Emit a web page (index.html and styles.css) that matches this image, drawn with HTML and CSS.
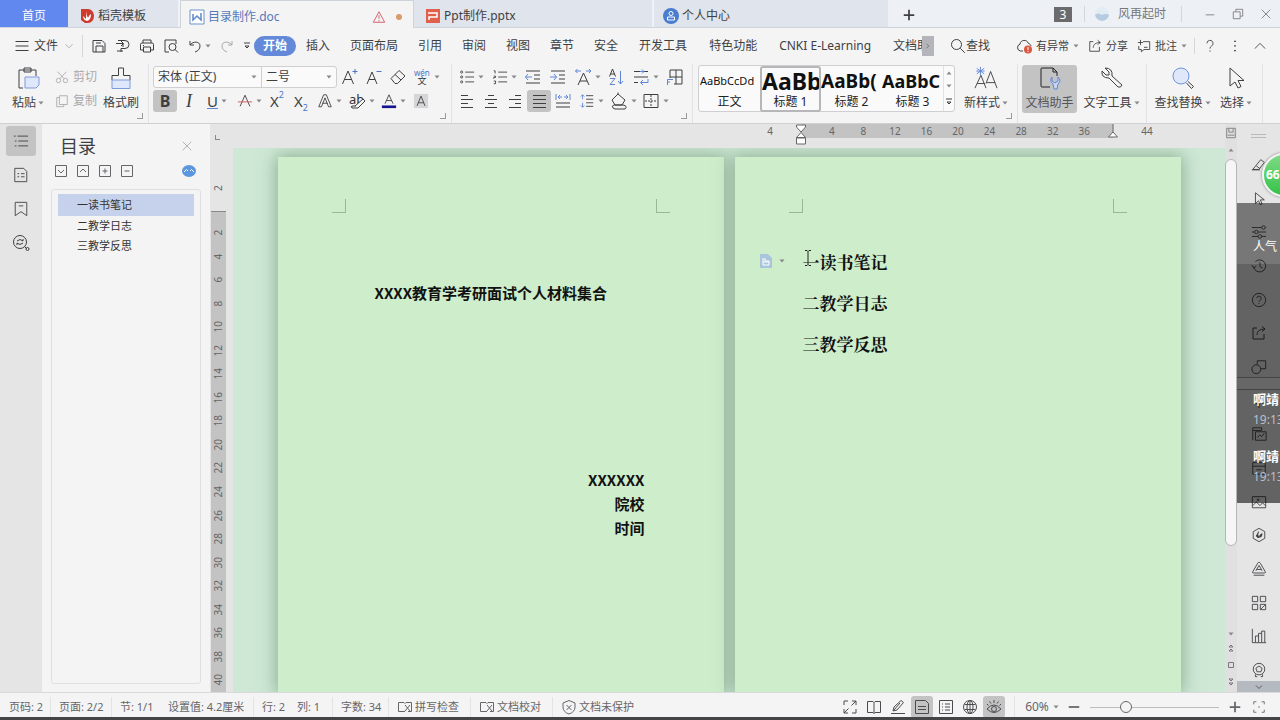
FILE: index.html
```html
<!DOCTYPE html>
<html lang="zh-CN">
<head>
<meta charset="utf-8">
<title>目录制作.doc</title>
<link rel="stylesheet" href="styles.css">
</head>
<body>
<svg class="sprite" aria-hidden="true">
  <symbol id="down" viewBox="0 0 6 4"><path d="M0.5 0.5h5L3 3.5z" fill="currentColor" stroke="none"/></symbol>
  <symbol id="up" viewBox="0 0 6 4"><path d="M0.5 3.5h5L3 0.5z" fill="currentColor" stroke="none"/></symbol>
  <symbol id="menu" viewBox="0 0 16 16"><path d="M1.500 3.500h13M1.500 8h13M1.500 12.500h13"/></symbol>
  <symbol id="chev-down" viewBox="0 0 16 16"><path d="M4 6l4 4 4-4"/></symbol>
  <symbol id="chev-up" viewBox="0 0 16 16"><path d="M2 11l6-6 6 6"/></symbol>
  <symbol id="chev-right" viewBox="0 0 16 16"><path d="M6 5l3 3-3 3"/></symbol>
  <symbol id="save" viewBox="0 0 16 16"><path d="M2 2.500h9l3 3V14H2zM5 14V8h7v6M5 5h5"/></symbol>
  <symbol id="export" viewBox="0 0 16 16"><path d="M3 2.500h7a4 4 0 0 1 0 8H6V14M1 5.500h7V9M2 13h6M6 3L8.500 5.500 6 8"/></symbol>
  <symbol id="print" viewBox="0 0 16 16"><path d="M4 5V2h8v3M4 12H1.500V6.500q0-1.500 1.500-1.500h10q1.500 0 1.500 1.500V12H12M4.500 9h7v5h-7zM4 7.500h1"/></symbol>
  <symbol id="preview" viewBox="0 0 16 16"><path d="M6 14H2V2h11v4"/><circle cx="9.500" cy="9" r="3.500"/><path d="M12 11.500l3 3"/></symbol>
  <symbol id="undo" viewBox="0 0 16 16"><path d="M3 3v4h4M3 7c3-4 10-4 10 1 0 3-2 5-5 6"/></symbol>
  <symbol id="redo" viewBox="0 0 16 16"><path d="M13 3v4H9M13 7C10 3 3 3 3 8c0 3 2 5 5 6"/></symbol>
  <symbol id="search" viewBox="0 0 16 16"><circle cx="6.500" cy="6.500" r="5"/><path d="M10.300 10.300l4.500 4.500"/></symbol>
  <symbol id="cloud" viewBox="0 0 16 16"><path d="M7 13H4.500a3.500 3.500 0 0 1-.5-6.800C4.500 1.500 11 1 12.500 5.500 14 6 15 7 15 8"/><circle cx="12" cy="11.500" r="4" fill="#d9583f" stroke="none"/><path d="M12 9v3M12 13v1" stroke="#fff"/></symbol>
  <symbol id="share" viewBox="0 0 16 16"><path d="M6 3H2v11h11V9M6 10c0-4 3-6 8-6M11 1.500L14 4l-3 2.500"/></symbol>
  <symbol id="comment" viewBox="0 0 16 16"><path d="M7 3h7.500v9H8l-3 2.500V12H2V8M4 1v6M1 4h6M8 9.500h4"/></symbol>
  <symbol id="dots" viewBox="0 0 16 16"><path d="M8 2v1.500M8 7.200v1.500M8 12.500V14" stroke-width="2"/></symbol>
  <symbol id="help" viewBox="0 0 16 16"><path d="M4.500 5a3.500 3.500 0 1 1 5 3.200Q8 9 8 11M8 13v1.500"/></symbol>
  <symbol id="paste" viewBox="0 0 24 24"><path d="M7 22H3V4h17v6M8 2h7v4H8z"/><path d="M9 11h14v8l-3 3H9z" fill="#dfe8fb" stroke="#7f9bd8"/></symbol>
  <symbol id="cut" viewBox="0 0 16 16"><circle cx="4" cy="12" r="2.500"/><circle cx="12" cy="12" r="2.500"/><path d="M5.500 10L13 2M10.500 10L3 2"/></symbol>
  <symbol id="copy" viewBox="0 0 16 16"><path d="M5 2h9v10H5zM5 4H2v10.500h8V12"/></symbol>
  <symbol id="brush" viewBox="0 0 24 24"><path d="M3 14V9.500h6.500V2h5v7.500H21V14"/><path d="M3 14h18v8.500H3z" fill="#dfe8fb" stroke="#7f9bd8"/></symbol>
  <symbol id="a-plus" viewBox="0 0 18 18"><path d="M1.500 16L7 3l5.500 13M3.500 11.500h7"/><path d="M14 1v5M11.500 3.500h5" stroke="#4b74c9"/></symbol>
  <symbol id="a-minus" viewBox="0 0 18 18"><path d="M2 16L7 4l5 12M4 11.500h6"/><path d="M11.500 3.500h5" stroke="#4b74c9"/></symbol>
  <symbol id="eraser" viewBox="0 0 18 18"><path d="M2 10.500l8-8 6 5.500-7.500 7.500H6zM6 6.500l6 5.500"/></symbol>
  <symbol id="pinyin" viewBox="0 0 20 18"><text x="1" y="8" font-size="9" fill="#4b74c9" stroke="none">wén</text><text x="5" y="17" font-size="10" fill="#333" stroke="none">文</text></symbol>
  <symbol id="strike" viewBox="0 0 18 18"><path d="M3.500 15L9 2.500 14.500 15"/><path d="M1 10h16" stroke="#d65050"/></symbol>
  <symbol id="effect" viewBox="0 0 18 18"><path d="M2 15.500L7.500 2h3L16 15.500h-3L9 5.500 5 15.500zM6 11.500h6"/></symbol>
  <symbol id="marker" viewBox="0 0 18 18"><text x="1" y="12" font-size="13" fill="#333" stroke="none">ab</text><path d="M7 14l8-7 2 2-7 7H4q-2-2 1-2h3" fill="#f5f5f6"/></symbol>
  <symbol id="font-color" viewBox="0 0 18 18"><path d="M4.500 12L9 2l4.500 10M6 8.500h6"/><path d="M1 15.500h16" stroke="#16168c" stroke-width="3"/></symbol>
  <symbol id="shade" viewBox="0 0 18 18"><path d="M1 1h16v16H1z" fill="#d6d6d8" stroke="none"/><path d="M4.500 14.500L9 3.500l4.500 11M6 11h6"/></symbol>
  <symbol id="bullets" viewBox="0 0 18 18"><circle cx="3" cy="3.500" r="1.200"/><circle cx="3" cy="9" r="1.200"/><circle cx="3" cy="14.500" r="1.200"/><path d="M7 3.500h10M7 9h10M7 14.500h10"/></symbol>
  <symbol id="numbers" viewBox="0 0 18 18"><path d="M2 2h1.500v3M2 8h2v1.500H2V11M2 13.500h2v3H2M7 3.500h10M7 9h10M7 14.500h10"/></symbol>
  <symbol id="outdent" viewBox="0 0 18 18"><path d="M2 3h14M10 7h6M10 11h6M2 15h14"/><path d="M8 9H1.500M4 6L1.500 9 4 12" stroke="#5f86d6"/></symbol>
  <symbol id="indent" viewBox="0 0 18 18"><path d="M2 3h14M10 7h6M10 11h6M2 15h14"/><path d="M1 9h6.500M5 6l2.500 3L5 12" stroke="#5f86d6"/></symbol>
  <symbol id="a-width" viewBox="0 0 18 18"><path d="M4 17L9.500 5 15 17M6 13h7"/><path d="M7 3H1.500M3.500 1L1.500 3l2 2M12 3h5M15 1l2 2-2 2" stroke="#5f86d6"/></symbol>
  <symbol id="sort" viewBox="0 0 18 18"><path d="M2.500 8.500L5.500 1l3 7.500M3.500 6h4"/><path d="M3 10.500h5L3 16.500h5M13.500 3v13M11 13l2.500 3 2.500-3" stroke="#5f86d6"/></symbol>
  <symbol id="wrap" viewBox="0 0 18 18"><path d="M2 3.500h6M2 9h14M2 14.500h4M12 3.500h4"/><path d="M8 3.500h4M10 1.500l2 2-2 2M16 11v3.500H9M11 12l-2.500 2.500L11 17" stroke="#5f86d6"/></symbol>
  <symbol id="layout" viewBox="0 0 18 18"><path d="M5 10V2h12v14H9M5 9h12M11 2v14"/><path d="M8 11.500H2.500V17M5 14H2.500" stroke="#5f86d6"/></symbol>
  <symbol id="al-left" viewBox="0 0 18 18"><path d="M3 3.500h7M3 7.500h12M3 11.500h7M3 15.500h12"/></symbol>
  <symbol id="al-center" viewBox="0 0 18 18"><path d="M6 3.500h6M3 7.500h12M6 11.500h6M3 15.500h12"/></symbol>
  <symbol id="al-right" viewBox="0 0 18 18"><path d="M9 3.500h6M3 7.500h12M9 11.500h6M3 15.500h12"/></symbol>
  <symbol id="al-just" viewBox="0 0 18 18"><path d="M3 3.500h13M3 7.500h13M3 11.500h13M3 15.500h13"/></symbol>
  <symbol id="al-dist" viewBox="0 0 18 18"><path d="M2 11h14M2 15h14"/><path d="M2 2v6M16 2v6M4 5h4M6 3L4 5l2 2M10 5h4M12 3l2 2-2 2" stroke="#5f86d6"/></symbol>
  <symbol id="spacing" viewBox="0 0 18 18"><path d="M8 3h8M8 7h8M8 11h8M8 15h8"/><path d="M4 2v5M2 4l2-2 2 2M4 16v-5M2 14l2 2 2-2" stroke="#5f86d6"/></symbol>
  <symbol id="bucket" viewBox="0 0 18 18"><path d="M2 8l6-6 7 6-3 5H5zM8 2V0.500M3 16q-2-2 1-3h9q5 1 2 4H5z"/></symbol>
  <symbol id="borders" viewBox="0 0 18 18"><path d="M2 2.500h14v13H2z"/><path d="M9 3v12M3 9h12" stroke-dasharray="2 1"/></symbol>
  <symbol id="new-style" viewBox="0 0 26 24"><path d="M1 23L7.500 9 13 23M3.500 18h8M13 18L18 5l7 18M14 17h9"/><path d="M7 0v9M3 1.500l8 6M11 1.500l-8 6M2.500 4.500h9" stroke="#5f86d6"/></symbol>
  <symbol id="assistant" viewBox="0 0 24 24"><path d="M12 21H4q-1 0-1-1V3q0-1 1-1h11l4 4v4M15 2v4h4" stroke="#222"/><path d="M14 11v4l3 2 3-2v-4q4 3 0 7l-1 5h-3l-1-5q-4-3-1-7z" fill="#c9d6f2" stroke="#5f86d6"/></symbol>
  <symbol id="wrench" viewBox="0 0 24 24"><path d="M5 2l4 4v3H6L2 5q-1 7 7 7l9 9q3 1 4-2l-10-9q1-8-7-8z"/></symbol>
  <symbol id="find-big" viewBox="0 0 24 24"><circle cx="10" cy="10" r="8" fill="#dfe8fb" stroke="#6f94dd"/><path d="M15.500 17l5 5.500 2-2-5.500-5"/></symbol>
  <symbol id="pointer" viewBox="0 0 24 24"><path d="M6 2v18l5-4 3 6 3-1.500-3-6h6z"/></symbol>
  <symbol id="outline" viewBox="0 0 18 18"><path d="M1 3.500h2M5 3.500h12M2 9h2M6 9h11M2 14.500h2M6 14.500h11"/></symbol>
  <symbol id="page" viewBox="0 0 18 18"><path d="M2 1.500h10l3.500 3.500V16.500H2zM5 7.500h2M9 7.500h4M5 11h2M9 11h4"/></symbol>
  <symbol id="bookmark" viewBox="0 0 18 18"><path d="M2.500 1.500h13v15L9 12l-6.500 4.500zM6.500 5.500h5"/></symbol>
  <symbol id="search-doc" viewBox="0 0 18 18"><circle cx="8" cy="8" r="6.500"/><path d="M12.500 12.500l2 2M5 7q3-3 6 0V5M11 9q-3 3-6 0v2"/><circle cx="15.500" cy="15" r="1.500"/></symbol>
  <symbol id="box-down" viewBox="0 0 14 14"><path d="M1.500 1.500h11v11h-11zM4 6l3 3 3-3"/></symbol>
  <symbol id="box-up" viewBox="0 0 14 14"><path d="M1.500 1.500h11v11h-11zM4 8l3-3 3 3"/></symbol>
  <symbol id="box-plus" viewBox="0 0 14 14"><path d="M1.500 1.500h11v11h-11zM4.500 7h5M7 4.500v5"/></symbol>
  <symbol id="box-minus" viewBox="0 0 14 14"><path d="M1.500 1.500h11v11h-11zM4.500 7h5"/></symbol>
  <symbol id="close" viewBox="0 0 14 14"><path d="M2 2l10 10M12 2L2 12"/></symbol>
  <symbol id="pencil" viewBox="0 0 18 18"><path d="M2 14l9-11 4 3-6 8zM6 10l4 3M1 14.500h9"/></symbol>
  <symbol id="arrow" viewBox="0 0 18 18"><path d="M5 2v12l3.500-3 2 4.500 2-1-2-4.500H15z"/></symbol>
  <symbol id="sliders" viewBox="0 0 18 18"><path d="M1 4h11M16 4h1M1 9h3M8 9h9M1 14h7M12 14h5"/><circle cx="14" cy="4" r="2"/><circle cx="6" cy="9" r="2"/><circle cx="10" cy="14" r="2"/></symbol>
  <symbol id="history" viewBox="0 0 18 18"><path d="M3 10A6.800 6.800 0 1 0 5 4M1 8l2 3 3-2M10 5v4.500l3 2"/></symbol>
  <symbol id="question" viewBox="0 0 18 18"><circle cx="9" cy="9" r="7.500"/><path d="M6.500 7a2.500 2.500 0 1 1 3.500 2.500Q9 10 9 11M9 12.500v1"/></symbol>
  <symbol id="shapes" viewBox="0 0 18 18"><circle cx="6" cy="11.500" r="5"/><path d="M7 6V2h9.500v9H11"/></symbol>
  <symbol id="plus-box" viewBox="0 0 18 18"><path d="M9 1v16M4 6h10v6H4z"/></symbol>
  <symbol id="pictures" viewBox="0 0 18 18"><path d="M2 16V2h10v3M2 5h10M5 6.500h12V16H5zM7 13l3-3 2 2 3-4"/></symbol>
  <symbol id="archive" viewBox="0 0 18 18"><path d="M2 3h14v13H2zM2 7h14M6 11h6"/></symbol>
  <symbol id="image" viewBox="0 0 18 18"><path d="M1.500 3h15v12.500h-15zM2 13l4-4 4 4 3-3 3 3"/><circle cx="8" cy="6.500" r="1"/></symbol>
  <symbol id="leaf" viewBox="0 0 18 18"><path d="M9 1.500l6.500 3.700v7.600L9 16.500l-6.500-3.700V5.200z"/><path d="M8.500 5q-2 4 .5 7-3 0-3-3M12.500 7.500q0 4-3 4 0-3 3-4z" fill="currentColor"/></symbol>
  <symbol id="triangle" viewBox="0 0 18 18"><path d="M9 1.500q1 0 1.500 1L16 12q1 1.500-1 1.500H3Q1 13.500 2 12l5.500-9.500q.5-1 1.500-1zM5.500 11L9 5l3.500 6M6.500 9.500h5M3 16h12"/></symbol>
  <symbol id="apps" viewBox="0 0 18 18"><path d="M1.500 1.500h6v6h-6zM10.500 1.500h6v6h-6zM1.500 10.500h6v6h-6zM10.500 10.500h6v6h-6zM11 16l5-5"/></symbol>
  <symbol id="chart" viewBox="0 0 18 18"><path d="M1.500 1v15.500H17M5 16V9h3.500v7M8.500 9V6H12v10M12 6V3.500h3.500V16"/></symbol>
  <symbol id="medal" viewBox="0 0 18 18"><circle cx="9" cy="8" r="6.500"/><path d="M9 4.500l3.500 2.500-1.300 4H6.800L5.500 7zM5 14v2.500h2M13 14v2.500h-2"/></symbol>
  <symbol id="expand" viewBox="0 0 16 16"><path d="M6 2H2v4M10 2h4v4M6 14H2v-4M10 14h4v-4M9.500 6.500L14 2M6.500 9.500L2 14"/></symbol>
  <symbol id="book" viewBox="0 0 16 16"><path d="M1.500 2.500H7l1 1 1-1h5.500v11H9l-1 1-1-1H1.500zM8 3.500v11"/></symbol>
  <symbol id="pen-line" viewBox="0 0 16 16"><path d="M3 12l1-4 7-6.500 2.500 2L7 11zM4 11l6-7M1 14.500h14"/></symbol>
  <symbol id="doc" viewBox="0 0 16 16"><path d="M1.500 1.500h10l3 3v10h-13zM4 7.500h8M4 10.500h8"/></symbol>
  <symbol id="list" viewBox="0 0 16 16"><path d="M1.500 1.500h13v13h-13zM4 5h1M7 5h5M4 8h1M7 8h5M4 11h1M7 11h5"/></symbol>
  <symbol id="globe" viewBox="0 0 16 16"><circle cx="8" cy="8" r="6.500"/><ellipse cx="8" cy="8" rx="3" ry="6.500"/><path d="M2.500 5.500h11M2.500 10.500h11M8 1.500v13"/></symbol>
  <symbol id="eye" viewBox="0 0 16 16"><path d="M1 10q7-8 14 0-7 7-14 0zM8 1v3M3.500 2.500l1.500 2M12.500 2.500L11 4.500M1 5l1.500 1.500M15 5l-1.500 1.500"/><circle cx="8" cy="10" r="2.500"/></symbol>
  <symbol id="fit" viewBox="0 0 16 16"><path d="M5 2H2v3M11 2h3v3M5 14H2v-3M11 14h3v-3M7 8h2"/></symbol>
  <symbol id="plus" viewBox="0 0 16 16"><path d="M8 2v12M2 8h12" stroke-width="2"/></symbol>
  <symbol id="minus" viewBox="0 0 16 16"><path d="M2 8h12" stroke-width="2"/></symbol>
  <symbol id="spell" viewBox="0 0 16 16"><path d="M8 12.500H1.500v-9H7l1 1 1-1h5.500v9H11M8 6l5 6M13 6l-5 6"/></symbol>
  <symbol id="shield" viewBox="0 0 16 16"><path d="M8 1.500L14 4v4q0 5-6 7-6-2-6-7V4zM5.500 6l5 5M10.500 6l-5 5"/></symbol>
  <symbol id="warning" viewBox="0 0 16 16"><path d="M8 2l6.500 12h-13zM8 6v4M8 11.500V13"/></symbol>
</svg>

<div class="app">
  <header class="titlebar">
    <button class="tab tab-home">首页</button>
    <button class="tab tab-docer">
      <svg class="logo" viewBox="0 0 16 16"><path d="M2 1h7a6 7 0 0 1 0 14H6L2 12z" fill="#cf3a2c"/><path d="M8 3q-1 4 1 7 1-3 3-4 0 6-4 7-4-1-4-5l3 3q0-5 1-8z" fill="#fff"/></svg>稻壳模板</button>
    <div class="tab tab-active">
      <svg class="logo" viewBox="0 0 16 16"><path d="M1 1h14v14H1z" fill="#fff" stroke="#6d92c9"/><path d="M4 5v6l4-4 4 4V4" fill="none" stroke="#5f8ac9" stroke-width="1.500"/></svg>
      <span class="grow">目录制作.doc</span>
      <svg class="i i14 red"><use href="#warning"/></svg><span class="unsaved"></span>
    </div>
    <button class="tab tab-ppt">
      <svg class="logo" viewBox="0 0 16 16"><path d="M1 1h14v14H1z" fill="#e0604c"/><path d="M3 5h9v4H4v3" fill="none" stroke="#fff" stroke-width="1.500"/></svg>Ppt制作.pptx</button>
    <button class="tab tab-user">
      <svg class="logo" viewBox="0 0 16 16"><circle cx="8" cy="8" r="8" fill="#4a7cd0"/><circle cx="8" cy="5.500" r="2" fill="none" stroke="#fff"/><path d="M4.500 9h7v3h-7z" fill="none" stroke="#fff"/></svg>个人中心</button>
    <button class="new-tab" aria-label="新建"><svg class="i i14"><use href="#plus"/></svg></button>
    <div class="window-tools">
      <span class="count">3</span>
      <span class="account"><svg class="logo" viewBox="0 0 16 16"><circle cx="8" cy="8" r="7" fill="#e2ecf4"/><path d="M1 9q3-3 7 0 4-2 7 0-1 5-7 6-6-1-7-6z" fill="#b5cbe0"/></svg>风再起时</span>
      <button aria-label="最小化"><svg class="i i12" viewBox="0 0 14 14"><path d="M2 8h10"/></svg></button>
      <button aria-label="还原"><svg class="i i12" viewBox="0 0 14 14"><path d="M1.500 4.500h8v8h-8zM4.500 4V1.500h8v8H10"/></svg></button>
      <button aria-label="关闭"><svg class="i i12"><use href="#close"/></svg></button>
    </div>
  </header>

  <nav class="menubar">
    <button class="file"><svg class="i i16"><use href="#menu"/></svg>文件<svg class="i i14 pale"><use href="#chev-down"/></svg></button>
    <div class="quick">
      <button aria-label="保存"><svg class="i i16"><use href="#save"/></svg></button>
      <button aria-label="输出"><svg class="i i16"><use href="#export"/></svg></button>
      <button aria-label="打印"><svg class="i i16"><use href="#print"/></svg></button>
      <button aria-label="预览"><svg class="i i16"><use href="#preview"/></svg></button>
      <button class="drop" aria-label="撤销"><svg class="i i16"><use href="#undo"/></svg><svg class="caret"><use href="#down"/></svg></button>
      <button class="pale" aria-label="恢复"><svg class="i i16"><use href="#redo"/></svg></button>
    </div>
    <button class="more" aria-label="更多"><svg class="i i10" viewBox="0 0 10 10"><path d="M2 2h6M3 5l2 2 2-2z"/></svg></button>
    <button class="pill">开始</button>
    <div class="menu-items">
      <button>插入</button><button>页面布局</button><button>引用</button><button>审阅</button><button>视图</button><button>章节</button><button>安全</button><button class="wide">开发工具</button><button class="wide">特色功能</button><button class="wide">CNKI E-Learning</button><button class="cut-off">文档助手</button>
    </div>
    <button class="scroll-menu" aria-label="向右"><svg class="i i12"><use href="#chev-right"/></svg></button>
    <button class="find"><svg class="i i16"><use href="#search"/></svg>查找</button>
    <div class="menu-right">
      <button><svg class="i i16"><use href="#cloud"/></svg>有异常<svg class="caret"><use href="#down"/></svg></button>
      <button><svg class="i i14"><use href="#share"/></svg>分享</button>
      <button><svg class="i i14"><use href="#comment"/></svg>批注<svg class="caret"><use href="#down"/></svg></button>
    </div>
    <div class="menu-end">
      <button aria-label="帮助"><svg class="i i14"><use href="#help"/></svg></button>
      <button aria-label="选项"><svg class="i i14"><use href="#dots"/></svg></button>
      <button aria-label="折叠"><svg class="i i14"><use href="#chev-up"/></svg></button>
    </div>
  </nav>

  <section class="ribbon">
    <div class="group launcher clipboard">
      <button class="big"><svg class="i i24"><use href="#paste"/></svg><span>粘贴<svg class="caret"><use href="#down"/></svg></span></button>
      <div class="stack pale">
        <button><svg class="i i14"><use href="#cut"/></svg>剪切</button>
        <button><svg class="i i14"><use href="#copy"/></svg>复制</button>
      </div>
      <button class="big"><svg class="i i24"><use href="#brush"/></svg><span>格式刷</span></button>
    </div>
    <div class="group launcher font">
      <div class="row">
        <div class="combo">
          <span class="combo-name"><select aria-label="字体"><option>宋体 (正文)</option></select><svg class="caret"><use href="#down"/></svg></span>
          <span class="combo-size"><select aria-label="字号"><option>二号</option></select><svg class="caret"><use href="#down"/></svg></span>
        </div>
        <button class="t" aria-label="增大字号"><svg class="i i18"><use href="#a-plus"/></svg></button>
        <button class="t" aria-label="减小字号"><svg class="i i18"><use href="#a-minus"/></svg></button>
        <button class="t" aria-label="清除格式"><svg class="i i18"><use href="#eraser"/></svg></button>
        <button class="t drop" aria-label="拼音"><svg class="i i18"><use href="#pinyin"/></svg><svg class="caret"><use href="#down"/></svg></button>
      </div>
      <div class="row">
        <button class="t on bold">B</button>
        <button class="t italic">I</button>
        <button class="t drop under"><u>U</u><svg class="caret"><use href="#down"/></svg></button>
        <button class="t drop" aria-label="删除线"><svg class="i i16"><use href="#strike"/></svg><svg class="caret"><use href="#down"/></svg></button>
        <button class="t script">X<sup>2</sup></button>
        <button class="t script">X<sub>2</sub></button>
        <button class="t drop" aria-label="文字效果"><svg class="i i16"><use href="#effect"/></svg><svg class="caret"><use href="#down"/></svg></button>
        <button class="t drop" aria-label="突出显示"><svg class="i i18"><use href="#marker"/></svg><svg class="caret"><use href="#down"/></svg></button>
        <button class="t drop" aria-label="字体颜色"><svg class="i i16"><use href="#font-color"/></svg><svg class="caret"><use href="#down"/></svg></button>
        <button class="t" aria-label="底纹"><svg class="i i16"><use href="#shade"/></svg></button>
      </div>
    </div>
    <div class="group launcher para">
      <div class="row loose">
        <button class="t drop" aria-label="项目符号"><svg class="i i16"><use href="#bullets"/></svg><svg class="caret"><use href="#down"/></svg></button>
        <button class="t drop" aria-label="编号"><svg class="i i16"><use href="#numbers"/></svg><svg class="caret"><use href="#down"/></svg></button>
        <button class="t" aria-label="减少缩进"><svg class="i i18"><use href="#outdent"/></svg></button>
        <button class="t" aria-label="增加缩进"><svg class="i i18"><use href="#indent"/></svg></button>
        <button class="t drop" aria-label="字符缩放"><svg class="i i18"><use href="#a-width"/></svg><svg class="caret"><use href="#down"/></svg></button>
        <button class="t" aria-label="排序"><svg class="i i18"><use href="#sort"/></svg></button>
        <button class="t drop" aria-label="换行"><svg class="i i18"><use href="#wrap"/></svg><svg class="caret"><use href="#down"/></svg></button>
        <button class="t" aria-label="制表"><svg class="i i18"><use href="#layout"/></svg></button>
      </div>
      <div class="row">
        <button class="t" aria-label="左对齐"><svg class="i i18"><use href="#al-left"/></svg></button>
        <button class="t" aria-label="居中"><svg class="i i18"><use href="#al-center"/></svg></button>
        <button class="t" aria-label="右对齐"><svg class="i i18"><use href="#al-right"/></svg></button>
        <button class="t on" aria-label="两端对齐"><svg class="i i18"><use href="#al-just"/></svg></button>
        <button class="t" aria-label="分散对齐"><svg class="i i18"><use href="#al-dist"/></svg></button>
        <button class="t drop" aria-label="行距"><svg class="i i16"><use href="#spacing"/></svg><svg class="caret"><use href="#down"/></svg></button>
        <button class="t drop" aria-label="填充"><svg class="i i18"><use href="#bucket"/></svg><svg class="caret"><use href="#down"/></svg></button>
        <button class="t drop" aria-label="边框"><svg class="i i18"><use href="#borders"/></svg><svg class="caret"><use href="#down"/></svg></button>
      </div>
    </div>
    <div class="group launcher styles">
      <div class="gallery">
        <button class="style"><span class="sample s0">AaBbCcDd</span><span>正文</span></button>
        <button class="style picked"><span class="sample s1">AaBb</span><span>标题 1</span></button>
        <button class="style"><span class="sample s2">AaBb(</span><span>标题 2</span></button>
        <button class="style"><span class="sample s3">AaBbC</span><span>标题 3</span></button>
        <div class="gallery-nav">
          <button class="pale" aria-label="上"><svg class="caret"><use href="#up"/></svg></button>
          <button aria-label="下"><svg class="caret"><use href="#down"/></svg></button>
          <button aria-label="展开"><svg class="i i10" viewBox="0 0 10 10"><path d="M2 2h6M3 5l2 2 2-2z"/></svg></button>
        </div>
      </div>
      <button class="big"><svg class="i i24"><use href="#new-style"/></svg><span>新样式<svg class="caret"><use href="#down"/></svg></span></button>
    </div>
    <div class="group tools">
      <button class="big on"><svg class="i i24"><use href="#assistant"/></svg><span>文档助手</span></button>
      <button class="big"><svg class="i i24"><use href="#wrench"/></svg><span>文字工具<svg class="caret"><use href="#down"/></svg></span></button>
    </div>
    <div class="group edit">
      <button class="big"><svg class="i i24"><use href="#find-big"/></svg><span>查找替换<svg class="caret"><use href="#down"/></svg></span></button>
      <button class="big"><svg class="i i24"><use href="#pointer"/></svg><span>选择<svg class="caret"><use href="#down"/></svg></span></button>
    </div>
  </section>

  <main class="work">
    <nav class="rail">
      <button class="on" aria-label="目录"><svg class="i i16"><use href="#outline"/></svg></button>
      <button aria-label="章节"><svg class="i i16"><use href="#page"/></svg></button>
      <button aria-label="书签"><svg class="i i16"><use href="#bookmark"/></svg></button>
      <button aria-label="查找"><svg class="i i18"><use href="#search-doc"/></svg></button>
    </nav>
    <aside class="toc">
      <div class="toc-head"><h2>目录</h2><button aria-label="关闭"><svg class="i i12 pale"><use href="#close"/></svg></button></div>
      <div class="toc-tools">
        <button aria-label="展开"><svg class="i i14"><use href="#box-down"/></svg></button>
        <button aria-label="收起"><svg class="i i14"><use href="#box-up"/></svg></button>
        <button aria-label="增加"><svg class="i i14"><use href="#box-plus"/></svg></button>
        <button aria-label="减少"><svg class="i i14"><use href="#box-minus"/></svg></button>
        <button class="smart" aria-label="智能目录"><svg class="logo" viewBox="0 0 16 16"><ellipse cx="8" cy="8" rx="7" ry="6" fill="#5b97de"/><path d="M3 9l2.500-2.500L7 8M9 8l1.500-1.500L13 9" stroke="#fff" fill="none"/></svg></button>
      </div>
      <ul class="toc-list">
        <li class="current">一读书笔记</li>
        <li>二教学日志</li>
        <li>三教学反思</li>
      </ul>
    </aside>

    <div class="editor">
      <div class="h-ruler">
        <span class="tab-stop"></span>
        <div class="h-scale">
          <span class="h-before">4</span>
          <div class="h-text">
            <svg class="marker-left" viewBox="0 0 12 22"><path d="M1.500 1h9v2L6 8 1.500 3zM6 8.500l4.500 5h-9zM1.500 14h9v6h-9z" fill="#fff" stroke="#666"/></svg>
            <span>4</span><span>8</span><span>12</span><span>16</span><span>20</span><span>24</span><span>28</span><span>32</span><span>36</span>
            <svg class="marker-right" viewBox="0 0 12 16"><path d="M6 0v8" stroke="#666"/><path d="M6 8l4.500 5h-9z" fill="#fff" stroke="#666"/></svg>
          </div>
          <span class="h-after">44</span>
        </div>
      </div>
      <div class="canvas">
        <div class="v-ruler">
          <span class="v-before">2</span>
          <div class="v-text"><span>2</span><span>4</span><span>6</span><span>8</span><span>10</span><span>12</span><span>14</span><span>16</span><span>18</span><span>20</span><span>22</span><span>24</span><span>26</span><span>28</span><span>30</span><span>32</span><span>34</span><span>36</span><span>38</span><span>40</span></div>
        </div>
        <div class="pages">
          <article class="page">
            <div class="corners"><i class="corner-l"></i><i class="corner-r"></i></div>
            <h1 class="cover-title">XXXX教育学考研面试个人材料集合</h1>
            <div class="cover-meta"><p>XXXXXX</p><p>院校</p><p>时间</p></div>
          </article>
          <article class="page">
            <div class="corners"><i class="corner-l"></i><i class="corner-r"></i></div>
            <div class="headings">
              <h2>一读书笔记</h2><h2>二教学日志</h2><h2>三教学反思</h2>
              <span class="style-tag"><svg class="logo" viewBox="0 0 16 16"><path d="M2 1h8l4 4v10H2z" fill="#a9c5dc"/><path d="M5 5v7h6V8H7V5M5 9h6" stroke="#fff" fill="none"/></svg><svg class="caret"><use href="#down"/></svg></span>
              <svg class="ibeam" viewBox="0 0 8 16"><path d="M1 .5h2l1 1 1-1h2M4 1.500v13M1 15.500h2l1-1 1 1h2" fill="none" stroke="#222"/></svg>
            </div>
          </article>
        </div>
      </div>
    </div>

    <div class="scroll">
      <svg class="i i12" viewBox="0 0 14 14"><path d="M2 1.500h10v11H2zM4.500 2v4h5V2M3 9.500h8"/></svg>
      <svg class="caret scroll-up"><use href="#up"/></svg>
      <div class="track"><div class="thumb"></div></div>
      <div class="scroll-end">
        <svg class="caret"><use href="#down"/></svg>
        <svg class="i i10" viewBox="0 0 10 10"><path d="M3 4l2-2 2 2zM3 8l2-2 2 2z"/></svg>
        <svg class="i i10" viewBox="0 0 10 10"><path d="M2.500 2.500h5v5h-5z"/></svg>
        <svg class="i i10" viewBox="0 0 10 10"><path d="M3 2l2 2 2-2zM3 6l2 2 2-2z"/></svg>
      </div>
    </div>

    <aside class="side">
      <span class="grip"></span>
      <div class="side-tools">
        <button aria-label="编辑"><svg class="i i16"><use href="#pencil"/></svg></button>
        <button aria-label="选择"><svg class="i i16"><use href="#arrow"/></svg></button>
        <button aria-label="设置"><svg class="i i16"><use href="#sliders"/></svg></button>
        <button aria-label="历史"><svg class="i i16"><use href="#history"/></svg></button>
        <button aria-label="帮助"><svg class="i i16"><use href="#question"/></svg></button>
        <button aria-label="分享"><svg class="i i16"><use href="#share"/></svg></button>
        <button aria-label="形状"><svg class="i i16"><use href="#shapes"/></svg></button>
        <button aria-label="添加"><svg class="i i16"><use href="#plus-box"/></svg></button>
        <button aria-label="素材"><svg class="i i16"><use href="#pictures"/></svg></button>
        <button aria-label="归档"><svg class="i i16"><use href="#archive"/></svg></button>
        <button aria-label="图片"><svg class="i i16"><use href="#image"/></svg></button>
        <button aria-label="稻壳"><svg class="i i16"><use href="#leaf"/></svg></button>
        <button aria-label="艺术字"><svg class="i i16"><use href="#triangle"/></svg></button>
        <button aria-label="应用"><svg class="i i16"><use href="#apps"/></svg></button>
        <button aria-label="图表"><svg class="i i16"><use href="#chart"/></svg></button>
        <button aria-label="会员"><svg class="i i16"><use href="#medal"/></svg></button>
      </div>
      <button class="side-more" aria-label="更多"><svg class="i i12"><use href="#chev-down"/></svg></button>
      <div class="chat">
        <div class="chat-top">人气</div>
        <div class="chat-mid"></div>
        <div class="chat-gap"></div>
        <div class="chat-list"><b>啊靖</b><time>19:13</time><b>啊靖</b><time>19:13</time></div>
      </div>
      <div class="ball">66</div>
    </aside>
  </main>

  <footer class="status">
    <div class="facts">
      <span class="f-page sep">页码: 2</span><span class="f-pages sep">页面: 2/2</span><span class="f-sect">节: 1/1</span><span class="f-set sep">设置值: 4.2厘米</span><span class="f-row">行: 2</span><span class="f-col sep">列: 1</span><span class="f-words sep">字数: 34</span>
      <button class="f-spell sep"><svg class="i i16"><use href="#spell"/></svg>拼写检查</button>
      <button class="f-spell sep"><svg class="i i16"><use href="#spell"/></svg>文档校对</button>
      <button><svg class="i i16"><use href="#shield"/></svg>文档未保护</button>
    </div>
    <div class="views">
      <button aria-label="全屏"><svg class="i i16"><use href="#expand"/></svg></button>
      <button aria-label="阅读"><svg class="i i16"><use href="#book"/></svg></button>
      <button aria-label="写作"><svg class="i i16"><use href="#pen-line"/></svg></button>
      <button class="on" aria-label="页面"><svg class="i i16"><use href="#doc"/></svg></button>
      <button aria-label="大纲"><svg class="i i16"><use href="#list"/></svg></button>
      <button aria-label="Web"><svg class="i i16"><use href="#globe"/></svg></button>
      <button class="on" aria-label="护眼"><svg class="i i16"><use href="#eye"/></svg></button>
    </div>
    <div class="zoom">
      <button class="percent">60%<svg class="caret"><use href="#down"/></svg></button>
      <button aria-label="缩小"><svg class="i i14"><use href="#minus"/></svg></button>
      <input type="range" min="0" max="100" value="26" aria-label="显示比例">
      <button aria-label="放大"><svg class="i i14"><use href="#plus"/></svg></button>
      <button aria-label="最佳比例"><svg class="i i14"><use href="#fit"/></svg></button>
    </div>
  </footer>
  <div class="desk-edge"></div>
</div>
</body>
</html>
```
FILE: styles.css
```css
* { box-sizing: border-box; }
body {
  margin: 0;
  font: 12px/16px "Noto Sans", "Noto Sans CJK SC", sans-serif;
  color: #3f3f42;
  background: #f4f4f5;
}
button, select {
  font: inherit;
  color: inherit;
  border: 0;
  padding: 0;
  margin: 0;
  background: none;
}
button {
  display: flex;
  align-items: center;
  justify-content: center;
  white-space: nowrap;
}
h1, h2, p, ul { margin: 0; padding: 0; list-style: none; }
.sprite { display: none; }
.app { height: 100vh; display: flex; flex-direction: column; overflow: hidden; }

/* icons */
.i { fill: none; stroke: currentColor; flex: none; display: block; }
.i10 { width: 10px; height: 10px; }
.i12 { width: 12px; height: 12px; }
.i14 { width: 14px; height: 14px; }
.i16 { width: 16px; height: 16px; }
.i18 { width: 18px; height: 18px; }
.i24 { width: 24px; height: 24px; }
.logo { width: 16px; height: 16px; flex: none; }
.caret { width: 6px; height: 4px; flex: none; color: #88888c; }
.pale { color: #a9a9ad; }
.red { color: #d0505a; }
.on { background: #c3c3c4; border-radius: 3px; }

/* title bar */
.titlebar {
  display: flex;
  height: 28px;
  flex: none;
  background: #edf1f5;
  border-bottom: 1px solid #cfd3da;
}
.tab {
  display: flex;
  align-items: center;
  justify-content: flex-start;
  gap: 3px;
  padding: 4px 11px 0;
  background: #e0e4ec;
  border-right: 2px solid #eff2f6;
}
.tab-home { width: 68px; justify-content: center; background: #6088ee; color: #fff; padding: 4px 0 0; border: 0; }
.tab-docer { width: 112px; }
.tab-active {
  width: 234px;
  margin-bottom: -1px;
  padding-left: 8px;
  background: #f4f4f5;
  color: #5878b8;
  border: 1px solid #cfd3da;
  border-bottom: 0;
}
.tab-ppt { width: 240px; }
.tab-user { width: 234px; padding-left: 9px; border: 0; }
.grow { flex: 1; }
.unsaved { width: 6px; height: 6px; border-radius: 50%; background: #d99a6c; margin-left: 7px; }
.new-tab { width: 42px; padding-top: 3px; }
.window-tools { display: flex; align-items: center; margin-left: auto; padding-top: 1px; color: #77777b; }
.window-tools button { width: 28px; height: 26px; }
.count {
  width: 20px;
  height: 15px;
  line-height: 15px;
  text-align: center;
  background: #6b6b6e;
  color: #fff;
  border-right: 2px double #edf1f5;
}
.account {
  display: flex;
  align-items: center;
  gap: 8px;
  margin: 0 14px 0 10px;
  padding: 0 15px 0 9px;
  border: solid #d3d6da;
  border-width: 0 1px;
}

/* menu bar */
.menubar { display: flex; align-items: center; height: 36px; flex: none; }
.file { gap: 4px; width: 68px; margin-left: 14px; justify-content: flex-start; }
.quick { display: flex; border-left: 1px solid #d6d6d8; padding-left: 4px; }
.quick button { width: 24px; height: 22px; }
.quick .drop { width: 32px; gap: 2px; }
.more { width: 15px; }
.pill { width: 42px; height: 20px; border-radius: 10px; background: #6389d8; color: #fff; font-weight: 700; }
.menu-items { display: flex; flex: 0 1 auto; }
.menu-items button { padding: 0 10px; }
.menu-items .wide { padding: 0 11px; }
.menu-items .cut-off { display: block; width: 40px; padding: 0 0 0 11px; overflow: hidden; text-align: left; }
.scroll-menu { width: 12px; height: 20px; background: #b4b5bb; color: #666; }
.find { gap: 0; margin-left: 16px; }
.menu-right { display: flex; gap: 9px; margin-left: auto; padding-right: 7px; border-right: 1px solid #d6d6d8; font-size: 11px; }
.menu-right button { gap: 4px; }
.menu-end { display: flex; gap: 11px; padding: 0 13px 0 8px; }

/* ribbon */
.ribbon { display: flex; height: 60px; flex: none; border-bottom: 1px solid #d0d0d2; }
.group { display: flex; border-right: 1px solid #e2e2e4; padding-top: 1px; }
.launcher { position: relative; }
.launcher::after {
  content: "";
  position: absolute;
  right: 5px;
  bottom: 4px;
  width: 5px;
  height: 5px;
  border: solid #99999c;
  border-width: 0 1px 1px 0;
}
.big { flex-direction: column; height: 48px; gap: 4px; }
.big span { display: flex; align-items: center; gap: 2px; line-height: 18px; }
.clipboard { width: 149px; padding-left: 5px; }
.clipboard .big { width: 46px; }
.stack { display: flex; flex-direction: column; width: 47px; padding-left: 3px; }
.stack button { height: 24px; gap: 4px; }
.font { flex-direction: column; width: 303px; padding-left: 4px; }
.row { display: flex; align-items: center; height: 24px; }
.loose { gap: 1px; }
.t { width: 24px; height: 22px; }
.t.drop { width: 32px; gap: 3px; }
.combo { display: flex; width: 184px; height: 22px; margin-right: 1px; border: 1px solid #cfcfd2; border-radius: 3px; background: #fafafa; }
.combo span { display: flex; align-items: center; padding-right: 4px; }
.combo-name { width: 108px; border-right: 1px solid #cfcfd2; }
.combo-size { flex: 1; }
.combo select { appearance: none; flex: 1; min-width: 0; padding-left: 4px; }
.bold { font-weight: 700; font-size: 16px; }
.italic { font: italic 18px "Liberation Serif", serif; }
.under { font-size: 15px; }
.under u { text-decoration-color: #5f86d6; }
.script { font-size: 15px; }
.script sup, .script sub { font-size: 9px; line-height: 9px; color: #4b74c9; }
.script sup { align-self: flex-start; }
.script sub { align-self: flex-end; }
.para { flex-direction: column; width: 241px; padding-left: 3px; }
.styles { width: 325px; padding-left: 5px; }
.gallery { display: flex; width: 257px; height: 47px; border: 1px solid #cfcfd2; border-radius: 3px; background: #fafafa; }
.style { flex-direction: column; justify-content: flex-end; width: 61px; padding-bottom: 1px; overflow: hidden; border-radius: 3px; color: #222; }
.picked { border: 2px solid #b7b7ba; padding-bottom: 0; margin-bottom: -1px; }
.sample { width: 100%; height: 26px; line-height: 26px; padding-left: 1px; overflow: hidden; text-align: left; color: #111; }
.s0 { font-size: 11px; }
.s1, .s2, .s3 { font-weight: 700; padding: 0; }
.s1 { font-size: 23px; }
.s2 { font-size: 19px; }
.s3 { font-size: 18px; }
.gallery-nav { display: grid; flex: 1; border-left: 1px solid #e2e2e4; }
.styles .big { flex: 1; }
.tools { width: 129px; padding-left: 4px; }
.tools .big { flex: 1; }
.tools .on { flex: 0 0 55px; color: #55555a; }
.edit { flex: 0 0 116px; }
.edit .big:first-child { width: 71px; }
.edit .big:last-child { width: 36px; }

/* left side */
.work { display: flex; flex: 1; min-height: 0; }
.rail { display: flex; flex-direction: column; width: 42px; gap: 4px; padding: 2px 6px; background: #e5e5e6; align-items: flex-end; }
.rail button { width: 30px; height: 30px; }
.toc { display: flex; flex-direction: column; width: 168px; background: #f4f4f5; }
.toc-head { display: flex; justify-content: space-between; align-items: center; height: 39px; padding: 5px 17px 0 18px; }
.toc-head h2 { font-size: 18px; line-height: 24px; font-weight: 400; }
.toc-tools { display: flex; gap: 8px; padding: 0 13px 0 12px; color: #66666a; }
.toc-tools .smart { margin-left: auto; }
.toc-list { flex: 1; margin: 10px 9px 8px; padding: 4px 6px; border: 1px solid #e0e0e2; border-radius: 3px; font-size: 11px; color: #333; }
.toc-list li { height: 20px; line-height: 20px; padding-left: 19px; }
.toc-list .current { height: 22px; line-height: 22px; background: #c6d2ec; }

/* rulers and pages */
.editor { display: flex; flex-direction: column; flex: 1; min-width: 0; background: #e5e5e6; font-size: 11px; }
.h-ruler { display: flex; height: 24px; flex: none; }
.tab-stop { width: 5px; height: 5px; margin: 11px 0 0 5px; border: solid #888; border-width: 0 0 1px 1px; }
.h-scale { display: flex; flex: 1; justify-content: flex-end; color: #666; line-height: 14px; font-size: 10px; }
.h-before { width: 62px; text-align: center; }
.h-after { width: 68px; margin-right: 44px; text-align: center; }
.h-text { position: relative; display: grid; grid-template-columns: repeat(9, 1fr); width: 312px; height: 14px; padding: 0 13px 0 15px; background: #c3c3c4; text-align: center; }
.marker-left { position: absolute; left: -6px; top: 0; width: 12px; height: 22px; }
.marker-right { position: absolute; right: -6px; top: 0; width: 12px; height: 16px; }
.canvas { display: flex; flex: 1; min-height: 0; }
.v-ruler { display: flex; flex-direction: column; align-items: flex-start; width: 23px; padding-left: 1px; font-size: 10px; line-height: 15px; color: #666; }
.v-ruler span { writing-mode: vertical-rl; transform: rotate(180deg); text-align: center; width: 15px; }
.v-before { height: 63px; padding-bottom: 17px; }
.v-text { display: grid; grid-auto-rows: 1fr; flex: 1; min-height: 0; padding-top: 9px; background: #c3c3c4; border-top: 1px solid #888; }
.pages {
  display: flex;
  justify-content: center;
  gap: 11px;
  flex: 1;
  padding-top: 9px;
  overflow: hidden;
  background: #cee8d5;
}
.page {
  width: 446px;
  padding: 42px 54px 0;
  background: #ceedcb;
  box-shadow: 0 0 16px 2px rgba(100, 140, 105, .6);
  color: #111;
}
.corners { display: flex; justify-content: space-between; }
.corners i { width: 14px; height: 14px; border: solid #9ab898; border-width: 0 0 1px; }
.corners .corner-l { border-right-width: 1px; }
.corners .corner-r { border-left-width: 1px; }
.cover-title { margin: 68px 0 0 43px; font: 700 15px/24px "Noto Sans CJK SC", sans-serif; white-space: nowrap; }
.cover-meta { margin-top: 163px; padding-right: 25px; text-align: right; font: 700 15px/24px "Noto Sans CJK SC", sans-serif; }
.headings { position: relative; margin-top: 28px; padding-left: 14px; }
.headings h2 { font: 700 17px/41px "Noto Serif CJK SC", "Noto Sans CJK SC", serif; }
.style-tag { position: absolute; left: -31px; top: 12px; display: flex; align-items: center; gap: 5px; }
.ibeam { position: absolute; left: 15px; top: 9px; width: 8px; height: 16px; }

/* scroll bar */
.scroll { display: flex; flex-direction: column; align-items: center; width: 12px; padding-top: 3px; background: #e0e0e1; color: #77777b; }
.scroll-up { margin: 9px 0 7px; }
.track { flex: 1; width: 12px; }
.thumb { height: 82%; background: #f6f6f7; border: 1px solid #b5b5b7; border-radius: 6px; }
.scroll-end { display: flex; flex-direction: column; align-items: center; gap: 7px; padding: 1px 0 5px; }

/* right tools */
.side { position: relative; display: flex; flex-direction: column; align-items: stretch; width: 43px; background: #e5e5e6; }
.grip { width: 15px; height: 4px; margin: 10px auto; border: solid #b9b9bb; border-width: 1px 0; }
.side-tools { display: grid; grid-auto-rows: 1fr; flex: 1; margin-bottom: -6px; }
.side-more { position: relative; height: 11px; background: #b5b9c0; }
.chat { position: absolute; left: 0; right: 0; top: 79px; color: #fff; overflow: hidden; }
.chat-top { height: 61px; padding: 36px 0 0 16px; background: rgba(0, 0, 0, .48); white-space: nowrap; }
.chat-mid { height: 114px; background: rgba(0, 0, 0, .57); border-bottom: 1px solid #444; }
.chat-gap { height: 12px; background: rgba(0, 0, 0, .55); border-bottom: 1px solid #444; }
.chat-list { display: flex; flex-direction: column; height: 113px; padding-left: 16px; background: rgba(0, 0, 0, .57); white-space: nowrap; }
.chat-list b { font-size: 13px; line-height: 18px; }
.chat-list time { height: 43px; line-height: 24px; color: #b9bfce; }
.ball {
  position: absolute;
  left: 25px;
  top: 29px;
  width: 44px;
  height: 44px;
  border: 2px solid #f4f4f5;
  border-radius: 50%;
  background: linear-gradient(#7edb84, #35c24a);
  box-shadow: 0 0 3px #777;
  color: #fff;
  font-weight: 700;
  line-height: 40px;
  padding-left: 2px;
}

/* status bar */
.status { display: flex; align-items: center; height: 25px; flex: none; padding-top: 4px; border-top: 1px solid #d9d9db; color: #66666a; }
.facts { display: flex; align-items: center; padding-left: 9px; white-space: nowrap; font-size: 11px; line-height: 20px; }
.facts button { gap: 2px; }
.sep { border-right: 1px solid #e4e4e6; margin-right: 8px; }
.f-page { width: 42px; }
.f-pages { width: 53px; }
.f-sect { width: 48px; }
.f-set { width: 86px; }
.f-row { width: 35px; }
.f-col { width: 36px; }
.f-words { width: 48px; }
.facts .f-spell { width: 74px; border-right: 1px solid #e4e4e6; margin-right: 8px; justify-content: flex-start; }
.views { display: flex; margin-left: auto; padding-right: 8px; border-right: 1px solid #e2e2e4; color: #4c4c50; }
.views button { width: 24px; height: 22px; }
.views .on { width: 22px; margin: 0 1px; }
.zoom { display: flex; align-items: center; padding: 0 14px 0 10px; }
.percent { gap: 4px; width: 34px; margin-right: 8px; }
.zoom input { appearance: none; width: 129px; height: 14px; margin: 0 9px; background: linear-gradient(#bdbdc0, #bdbdc0) center / 100% 1px no-repeat; }
.zoom input::-webkit-slider-thumb { appearance: none; width: 12px; height: 12px; border: 1px solid #66666a; border-radius: 50%; background: #f4f4f5; }
.zoom button:last-child { margin-left: 10px; }
.desk-edge { height: 3px; flex: none; background: #444446; }
```
